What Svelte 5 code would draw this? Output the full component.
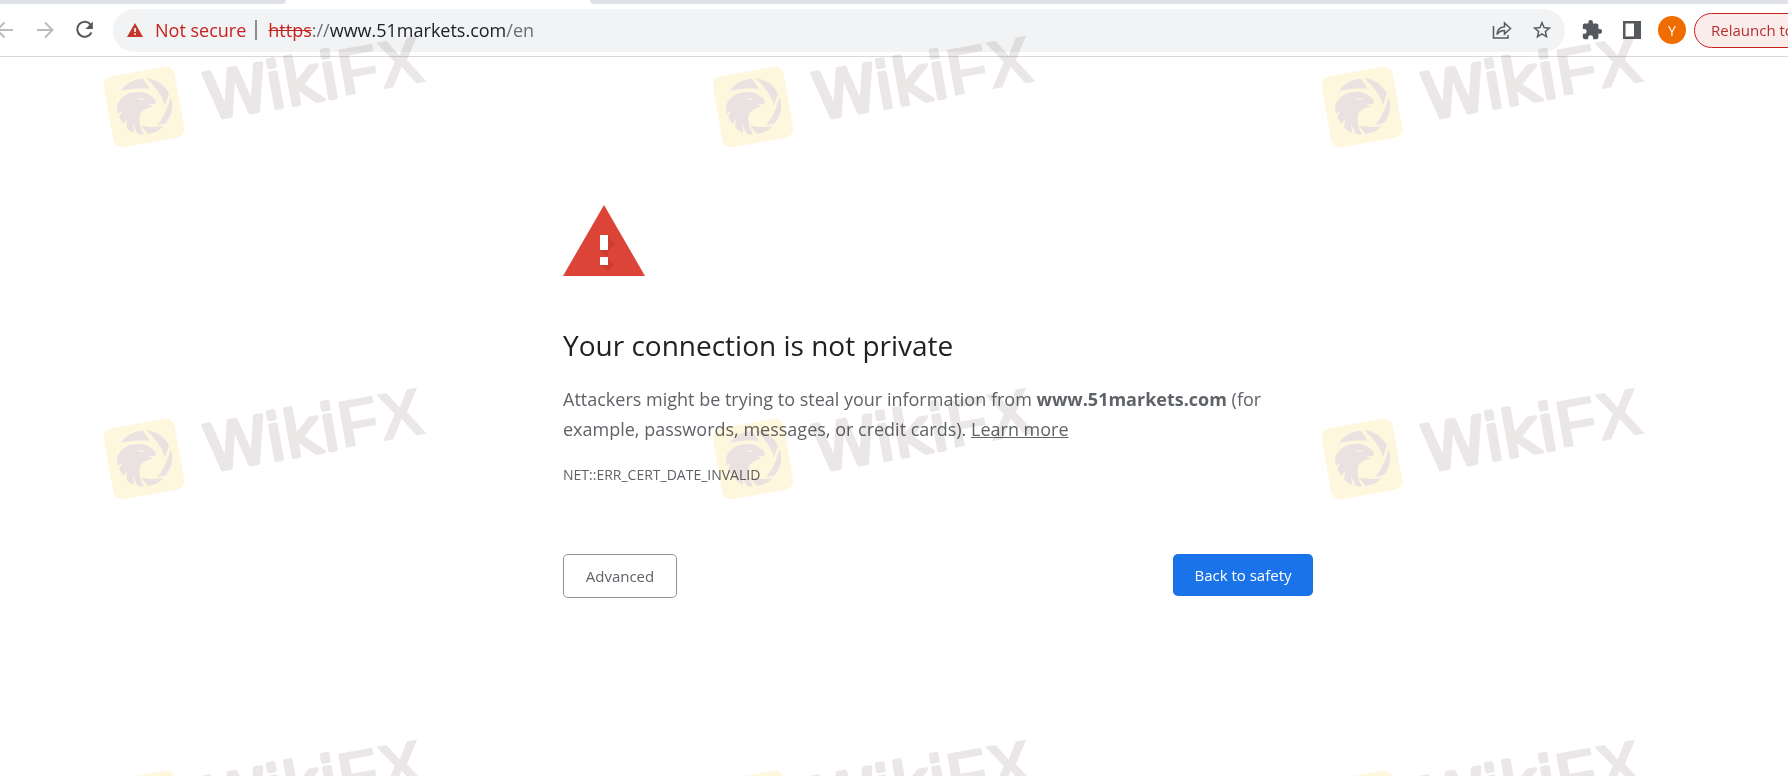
<script>
    const host = 'www.51markets.com';
    const tiles = Array.from({length: 9}, (_, i) => i);
</script>

<div class="screen">
    <div class="browser">
        <div class="tabstrip">
            <div class="tab left"></div>
            <div class="tab active"></div>
            <div class="tab right"></div>
        </div>

        <header class="toolbar">
            <nav>
                <button class="icon" aria-label="Back">
                    <svg class="dim" width="24" height="24" viewBox="0 0 24 24"><path d="M21 12H5M12.500 4.500L5 12l7.500 7.500"/></svg>
                </button>
                <button class="icon" aria-label="Forward">
                    <svg class="dim" width="24" height="24" viewBox="0 0 24 24"><path d="M5 12h15M13 4.500l7.500 7.500-7.500 7.500"/></svg>
                </button>
                <button class="icon" aria-label="Reload">
                    <svg class="line" width="24" height="24" viewBox="0 0 24 24">
                        <path d="M18.800 6.800A7.500 7.500 0 1 0 19.500 14.500"/>
                        <path class="solid" d="M20.800 3.600v7.400h-7.400z"/>
                    </svg>
                </button>
            </nav>

            <div class="address">
                <svg width="16" height="14" viewBox="0 0 16 14">
                    <path fill="#c5352b" d="M8 0l8 14H0z"/>
                    <path fill="#f1f3f4" d="M7.200 5h1.700v4H7.200zM7.200 10.200h1.700v1.700H7.200z"/>
                </svg>
                <span class="insecure">Not secure</span>
                <span class="bar"></span>
                <span class="url"><s>https</s>://<b>{host}</b>/en</span>
                <button class="icon" aria-label="Share">
                    <svg class="thin" width="22" height="22" viewBox="0 0 22 22">
                        <path d="M2.500 7v12h14.500v-3"/>
                        <path d="M6 15.500c.4-5 3-7.500 7.500-7.800V4l6 5.500-6 5.500v-3.500c-3.500 0-5.700 1.200-7.500 4z"/>
                    </svg>
                </button>
                <button class="icon" aria-label="Bookmark this tab">
                    <svg width="22" height="22" viewBox="0 0 24 24">
                        <path fill="#55595e" d="M22 9.240l-7.190-.62L12 2 9.190 8.630 2 9.240l5.460 4.730L5.820 21 12 17.270 18.180 21l-1.630-7.030L22 9.240zM12 15.400l-3.760 2.270 1-4.280-3.320-2.880 4.380-.38L12 6.100l1.710 4.040 4.380.38-3.320 2.880 1 4.280L12 15.400z"/>
                    </svg>
                </button>
            </div>

            <div class="actions">
                <button class="icon" aria-label="Extensions">
                    <svg width="22" height="22" viewBox="0 0 24 24">
                        <path fill="#55595e" d="M20.500 11H19V7c0-1.100-.9-2-2-2h-4V3.500a2.500 2.500 0 0 0-5 0V5H4c-1.100 0-1.990.9-1.990 2v3.800H3.500a2.700 2.700 0 0 1 0 5.400H2V20c0 1.100.9 2 2 2h3.800v-1.500a2.700 2.700 0 0 1 5.400 0V22H17c1.100 0 2-.9 2-2v-4h1.500a2.500 2.500 0 0 0 0-5z"/>
                    </svg>
                </button>
                <button class="icon" aria-label="Side panel">
                    <svg width="18" height="18" viewBox="0 0 18 18">
                        <path fill="#55595e" fill-rule="evenodd" d="M0 0h18v18H0zM2.500 2.500v13H11v-13z"/>
                    </svg>
                </button>
                <button class="avatar">Y</button>
                <button class="relaunch">Relaunch to</button>
            </div>
        </header>

        <main>
            <svg class="warning" width="82" height="72" viewBox="0 0 82 72">
                <path fill="#db4437" d="M41 0l41 71H0z"/>
                <path fill="#b93328" d="M45 31l7 8-7 7v7l6 7-6 6-8-6 8-8-8-7z" opacity=".4"/>
                <path fill="#fff" d="M37 30h8v15h-8zM37 52h8v8h-8z"/>
            </svg>
            <h1>Your connection is not private</h1>
            <p>
                Attackers might be trying to steal your information from <strong>{host}</strong> (for
                example, passwords, messages, or credit cards). <a href="#learn">Learn more</a>
            </p>
            <div class="code">NET::ERR_CERT_DATE_INVALID</div>
            <div class="buttons">
                <button class="advanced">Advanced</button>
                <button class="safety">Back to safety</button>
            </div>
        </main>
    </div>

    <div class="watermarks" aria-hidden="true">
        {#each tiles as tile (tile)}
            <svg width="609" height="352" viewBox="-144 -107 609 352">
                <g transform="rotate(-10)">
                    <rect x="-36" y="-36" width="72" height="72" rx="9" fill="#fff4d6" opacity=".8"/>
                    <g fill="#e9e2e1">
                        <!-- shutter blades around the head -->
                        <path d="M-20 -20Q-10 -30 4 -28L9 -17Q-4 -21 -20 -20z"/>
                        <path d="M7 -28Q22 -24 27 -9L21 2Q19 -14 7 -28z"/>
                        <path d="M28 -5Q30 10 18 20L10 20Q20 12 28 -5z"/>
                        <path d="M-6 18Q4 22 16 22Q9 28 -1 27z"/>
                        <!-- eagle -->
                        <path fill-rule="evenodd" d="M-26 -6Q-22 -14 -12 -16Q4 -17 9 -9Q14 -6 12 -1L4 -2L9 1Q0 1 -5 6Q-9 14 -5 27Q-9 27 -11 25L-14 14L-14 24Q-19 21 -21 17L-19 9L-23 13Q-26 9 -26 5L-22 0L-27 2Q-27 -3 -26 -6zM-6 -10Q-2 -6 3 -8Q-1 -9 -6 -10z"/>
                    </g>
                    <g class="mark" opacity=".13">
                        <text x="62" y="24"><tspan class="round">Wiki</tspan><tspan>FX</tspan></text>
                    </g>
                </g>
            </svg>
        {/each}
    </div>
</div>

<style>
    :global(body) {
        margin: 0;
        background: #fff;
        font-family: "Open Sans", "Noto Sans", sans-serif;
    }

    .screen {
        position: relative;
        overflow: hidden;
        min-height: 100vh;
    }

    /* the window runs past the right edge of the screen */
    .browser {
        width: calc(100% + 88px);
    }

    .tabstrip {
        display: flex;
        height: 4px;
        background: #fff;
    }

    .tab {
        background: #dee1e6;
    }

    .left {
        width: 286px;
        border-bottom-right-radius: 8px;
    }

    .active {
        width: 304px;
        background: #fff;
    }

    .right {
        flex: 1;
        border-bottom-left-radius: 8px;
    }

    .toolbar {
        display: flex;
        align-items: center;
        height: 52px;
        border-bottom: 1px solid #d8d8da;
    }

    button {
        font-family: inherit;
        cursor: pointer;
    }

    .icon {
        display: flex;
        padding: 0;
        border: none;
        background: none;
    }

    nav {
        display: flex;
        gap: 16px;
        width: 113px;
    }

    nav .icon:first-child {
        margin-left: -8px;
    }

    .dim, .line, .thin {
        fill: none;
        stroke: #55595e;
        stroke-width: 2;
    }

    .dim {
        stroke: #b9bbbd;
    }

    .thin {
        stroke-width: 1.5;
    }

    .solid {
        fill: #55595e;
        stroke: none;
    }

    .address {
        display: flex;
        flex: 1;
        align-items: center;
        box-sizing: border-box;
        height: 43px;
        padding: 0 12px 0 14px;
        border-radius: 22px;
        background: #f1f3f4;
        font-size: 18px;
    }

    .insecure {
        margin-left: 12px;
        color: #c5221f;
    }

    .bar {
        width: 2px;
        height: 20px;
        margin: 0 11px 0 9px;
        background: #8b8d90;
    }

    .url {
        flex: 1;
        color: #6b6f74;
    }

    .url s {
        color: #c5221f;
    }

    .url b {
        color: #202124;
        font-weight: 400;
    }

    .address .icon + .icon {
        margin-left: 18px;
    }

    .actions {
        display: flex;
        align-items: center;
        gap: 20px;
        padding-left: 16px;
    }

    .avatar {
        width: 28px;
        height: 28px;
        margin-right: -12px;
        margin-left: -3px;
        padding: 0;
        border: none;
        border-radius: 50%;
        background: #ef6c00;
        color: #fff;
        font-size: 14px;
    }

    .relaunch {
        width: 182px;
        height: 35px;
        padding: 0 16px;
        border: 1px solid #c5221f;
        border-radius: 18px;
        background: #fbecec;
        color: #b3312c;
        font-size: 15px;
        text-align: left;
    }

    main {
        max-width: 750px;
        margin: 0 auto;
        padding-top: 148px;
        color: #5f6368;
    }

    .warning {
        display: block;
    }

    h1 {
        margin: 46px 0 17px;
        color: #202124;
        font-size: 28px;
        font-weight: 400;
        line-height: 44px;
    }

    p {
        margin: 0;
        font-size: 18px;
        line-height: 30px;
    }

    a {
        color: inherit;
    }

    .code {
        margin-top: 21px;
        font-size: 14px;
        line-height: 20px;
    }

    .buttons {
        display: flex;
        align-items: flex-start;
        justify-content: space-between;
        margin-top: 69px;
    }

    .advanced, .safety {
        border-radius: 5px;
        font-size: 15px;
    }

    .advanced {
        width: 114px;
        height: 44px;
        border: 1px solid #8f9296;
        background: #fff;
        color: #5f6368;
    }

    .safety {
        width: 140px;
        height: 42px;
        border: none;
        background: #1a73e8;
        color: #fff;
    }

    .watermarks {
        position: absolute;
        inset: 0;
        display: grid;
        grid-template-columns: repeat(3, 609px);
        align-content: start;
        overflow: hidden;
        pointer-events: none;
        mix-blend-mode: multiply;
    }

    .mark {
        fill: #6b4a4a;
        stroke: #6b4a4a;
        stroke-width: 0;
        font-family: "Liberation Sans", Arial, sans-serif;
        font-size: 68px;
        font-weight: 700;
    }

    /* thin letters with a round outline give the soft ends of the logo */
    .round {
        font-family: "DejaVu Sans", sans-serif;
        font-size: 64px;
        font-weight: 400;
        stroke-width: 4;
        stroke-linejoin: round;
    }
</style>
